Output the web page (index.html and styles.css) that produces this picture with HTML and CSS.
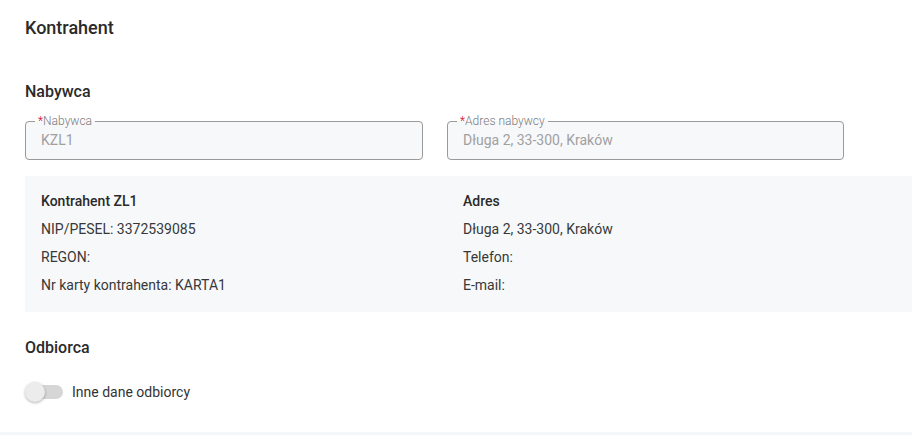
FILE: index.html
```html
<!DOCTYPE html>
<html lang="pl">
<head>
<meta charset="utf-8">
<title>Kontrahent</title>
<link rel="stylesheet" href="styles.css">
</head>
<body>
<main class="page">
  <h1 class="title">Kontrahent</h1>

  <h2 class="section-title section-buyer">Nabywca</h2>

  <div class="fields">
    <fieldset class="field">
      <legend class="field-label"><span class="req">*</span>Nabywca</legend>
      <div class="field-value">KZL1</div>
    </fieldset>
    <fieldset class="field">
      <legend class="field-label"><span class="req">*</span>Adres nabywcy</legend>
      <div class="field-value">Długa 2, 33-300, Kraków</div>
    </fieldset>
  </div>

  <section class="info">
    <div class="info-col">
      <div class="info-head">Kontrahent ZL1</div>
      <div class="info-row">NIP/PESEL: 3372539085</div>
      <div class="info-row">REGON:</div>
      <div class="info-row">Nr karty kontrahenta: KARTA1</div>
    </div>
    <div class="info-col">
      <div class="info-head">Adres</div>
      <div class="info-row">Długa 2, 33-300, Kraków</div>
      <div class="info-row">Telefon:</div>
      <div class="info-row">E-mail:</div>
    </div>
  </section>

  <h2 class="section-title section-recipient">Odbiorca</h2>

  <label class="toggle-row">
    <span class="toggle"><span class="toggle-track"></span><span class="toggle-thumb"></span></span>
    <span class="toggle-text">Inne dane odbiorcy</span>
  </label>
</main>
<div class="bottom-band"></div>
</body>
</html>
```

FILE: styles.css
```css
html, body {
  margin: 0;
  padding: 0;
  background: #ffffff;
  overflow: hidden;
}

body {
  font-family: Roboto, "Liberation Sans", Arial, sans-serif;
  color: #333333;
  width: 912px;
  height: 435px;
  position: relative;
}

.page {
  padding: 17px 0 0 25px;
}

.title {
  margin: 0;
  font-size: 18px;
  line-height: 22px;
  font-weight: 500;
  color: #2a2a2a;
}

.section-title {
  margin: 0;
  font-size: 16px;
  line-height: 20px;
  font-weight: 500;
  color: #2a2a2a;
}

.section-buyer {
  margin-top: 43px;
}

.fields {
  display: grid;
  grid-template-columns: 398px 397px;
  column-gap: 24px;
  margin-top: 12px;
}

.field {
  margin: 0;
  min-width: 0;
  border: 1px solid #9a9a9a;
  border-radius: 4px;
  background: #f7f8fa;
  padding: 0 8px 9px 9px;
}

.field-label {
  padding: 0 3px;
  margin-left: 0;
  font-size: 12px;
  line-height: 14px;
  font-weight: 300;
  color: #7a7a7a;
}

.req {
  color: #d0021b;
}

.field-value {
  padding: 2px 0 0 6px;
  font-size: 14px;
  line-height: 20px;
  font-weight: 400;
  color: #a0a0a0;
}

.info {
  display: grid;
  grid-template-columns: 422px 1fr;
  margin-top: 16px;
  margin-right: -20px;
  background: #f7f8fa;
  padding: 15px 16px 17px 16px;
}

.info-col {
  display: flex;
  flex-direction: column;
  row-gap: 8px;
}

.info-head {
  font-size: 14px;
  line-height: 20px;
  font-weight: 500;
  color: #2a2a2a;
}

.info-row {
  font-size: 14px;
  line-height: 20px;
  font-weight: 400;
  color: #383838;
}

.section-recipient {
  margin-top: 26px;
}

.toggle-row {
  display: flex;
  align-items: center;
  column-gap: 9px;
  margin-top: 24px;
  height: 20px;
}

.toggle {
  position: relative;
  width: 38px;
  height: 20px;
  flex: none;
}

.toggle-track {
  position: absolute;
  left: 2px;
  right: 0;
  top: 3px;
  height: 14px;
  border-radius: 7px;
  background: #d6d6d6;
}

.toggle-thumb {
  position: absolute;
  left: 0;
  top: 0;
  width: 20px;
  height: 20px;
  border-radius: 50%;
  background: #ececec;
  box-shadow: 0 1px 3px rgba(0, 0, 0, 0.3);
}

.toggle-text {
  font-size: 14px;
  line-height: 20px;
  color: #333333;
}

.bottom-band {
  position: absolute;
  left: 0;
  right: 0;
  top: 432px;
  height: 3px;
  background: #f5f6f8;
}
```
